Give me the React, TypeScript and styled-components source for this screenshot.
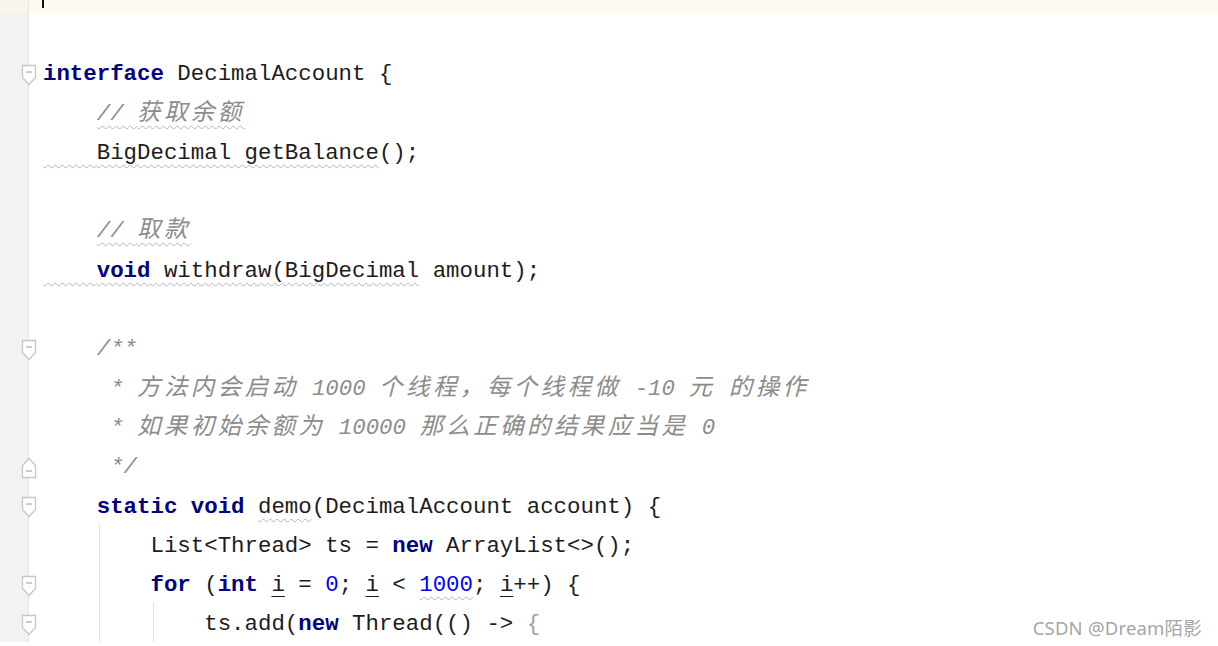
import React from "react";
import styled, { createGlobalStyle } from "styled-components";

const COL = 13.45;
const LINE_H = 39.3;

const Global = createGlobalStyle`
  html, body { margin: 0; padding: 0; background: #ffffff; }
  body { overflow: hidden; }
`;

const Page = styled.div`
  position: relative;
  width: 1218px;
  height: 646px;
  overflow: hidden;
  background: #ffffff;
`;

const Lines = styled.div`
  display: flex;
  flex-direction: column;
  margin-top: -26.3px;
`;

const Row = styled.div`
  display: flex;
  height: ${LINE_H}px;
  flex: none;
`;

const GutterCell = styled.div<{ $current?: boolean }>`
  position: relative;
  width: 28px;
  flex: none;
  background: ${(p) => (p.$current ? "#f7f5ec" : "#f2f2f2")};
  border-right: 1px solid #e4e4e4;
`;

const CodeCell = styled.div<{ $current?: boolean }>`
  position: relative;
  flex: 1;
  box-sizing: border-box;
  padding: 5px 0 0 14px;
  background: ${(p) => (p.$current ? "#fdfbef" : "#ffffff")};
  font-family: "Liberation Mono", "DejaVu Sans Mono", monospace;
  font-size: 22.4px;
  line-height: ${LINE_H - 3.5}px;
  white-space: pre;
  color: #1c1c1c;
`;

const Caret = styled.span`
  position: absolute;
  left: 13px;
  bottom: 5px;
  width: 2px;
  height: 14px;
  background: #111;
`;

const FoldBox = styled.svg`
  position: absolute;
  left: 21px;
  top: 50%;
  margin-top: -8px;
  width: 16px;
  height: 22px;
  z-index: 2;
`;

const Guide = styled.span<{ $col: number }>`
  position: absolute;
  top: 0;
  bottom: 0;
  left: ${(p) => 14 + p.$col * COL + 2}px;
  width: 1px;
  background: #e2e2e2;
`;

const Kw = styled.span`
  color: #000080;
  font-weight: bold;
`;

const Num = styled.span`
  color: #0000ff;
`;

const Comment = styled.span`
  color: #8c8c8c;
  font-style: italic;
`;

const Han = styled.span`
  font-family: "Noto Sans CJK SC", sans-serif;
  font-size: 23.5px;
  line-height: 1;
  letter-spacing: ${2 * COL - 23.5}px;
`;

const Wavy = styled.span`
  text-decoration: underline wavy #b4b4b4;
  text-decoration-thickness: 1px;
  text-decoration-skip-ink: none;
  text-underline-offset: 5px;
`;

const Under = styled.span`
  text-decoration: underline solid #1c1c1c;
  text-decoration-thickness: 1px;
  text-underline-offset: 5px;
`;

const Faded = styled.span`
  color: #a0a0a0;
`;

const Watermark = styled.div`
  position: absolute;
  right: 16px;
  bottom: 6px;
  font-family: "Noto Sans", "Noto Sans CJK SC", sans-serif;
  font-size: 18.5px;
  color: #a6a6a6;
  letter-spacing: 0.2px;
`;

type Fold = "open" | "close" | undefined;

const FoldMarker: React.FC<{ kind: "open" | "close" }> = ({ kind }) => (
  <FoldBox viewBox="0 0 16 22">
    {kind === "open" ? (
      <>
        <path d="M1.5 1.5 H14.5 V13.5 L8 20.5 L1.5 13.5 Z" fill="#ffffff" stroke="#c6c6c6" strokeWidth="1.3" />
        <path d="M5 8 H11" stroke="#b0b0b0" strokeWidth="1.3" />
      </>
    ) : (
      <>
        <path d="M1.5 20.5 H14.5 V8.5 L8 1.5 L1.5 8.5 Z" fill="#ffffff" stroke="#c6c6c6" strokeWidth="1.3" />
        <path d="M5 14 H11" stroke="#b0b0b0" strokeWidth="1.3" />
      </>
    )}
  </FoldBox>
);

const Line: React.FC<{
  fold?: Fold;
  current?: boolean;
  guides?: number[];
  children?: React.ReactNode;
}> = ({ fold, current, guides = [], children }) => (
  <Row>
    <GutterCell $current={current}>{fold && <FoldMarker kind={fold} />}</GutterCell>
    <CodeCell $current={current}>
      {guides.map((g) => (
        <Guide key={g} $col={g} />
      ))}
      {current && <Caret />}
      {children}
    </CodeCell>
  </Row>
);

export default function App() {
  return (
    <Page>
      <Global />
      <Lines>
        <Line current />
        <Line />
        <Line fold="open">
          <Kw>interface</Kw> DecimalAccount {"{"}
        </Line>
        <Line>
          {"    "}
          <Comment>
            <Wavy>
              // <Han>获取余额</Han>
            </Wavy>
          </Comment>
        </Line>
        <Line>
          <Wavy>{"    "}BigDecimal getBalance</Wavy>();
        </Line>
        <Line />
        <Line>
          {"    "}
          <Comment>
            <Wavy>
              // <Han>取款</Han>
            </Wavy>
          </Comment>
        </Line>
        <Line>
          <Wavy>
            {"    "}
            <Kw>void</Kw> withdraw(BigDecimal
          </Wavy>{" "}
          amount);
        </Line>
        <Line />
        <Line fold="open">
          {"    "}
          <Comment>/**</Comment>
        </Line>
        <Line>
          {"     "}
          <Comment>
            * <Han>方法内会启动</Han> 1000 <Han>个线程，每个线程做</Han> -10 <Han>元</Han> <Han>的操作</Han>
          </Comment>
        </Line>
        <Line>
          {"     "}
          <Comment>
            * <Han>如果初始余额为</Han> 10000 <Han>那么正确的结果应当是</Han> 0
          </Comment>
        </Line>
        <Line fold="close">
          {"     "}
          <Comment>*/</Comment>
        </Line>
        <Line fold="open">
          {"    "}
          <Kw>static</Kw> <Kw>void</Kw> <Wavy>demo</Wavy>(DecimalAccount account) {"{"}
        </Line>
        <Line guides={[4]}>
          {"        "}List&lt;Thread&gt; ts = <Kw>new</Kw> ArrayList&lt;&gt;();
        </Line>
        <Line fold="open" guides={[4]}>
          {"        "}
          <Kw>for</Kw> (<Kw>int</Kw> <Under>i</Under> = <Num>0</Num>; <Under>i</Under> &lt;{" "}
          <Num>
            <Wavy>1000</Wavy>
          </Num>
          ; <Under>i</Under>++) {"{"}
        </Line>
        <Line fold="open" guides={[4, 8]}>
          {"            "}ts.add(<Kw>new</Kw> Thread(() -&gt; <Faded>{"{"}</Faded>
        </Line>
      </Lines>
      <Watermark>CSDN @Dream陌影</Watermark>
    </Page>
  );
}
